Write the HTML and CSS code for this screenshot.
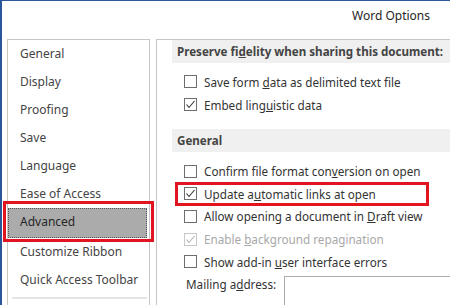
FILE: index.html
```html
<!DOCTYPE html>
<html lang="en">

<head>
  <meta charset="UTF-8" />
  <title>Word Options</title>
  <link rel="stylesheet" href="styles.css">
</head>

<body>
  <div class="window">
    <div class="titlebar">
      <span class="title">Word Options</span>
    </div>

    <div class="main">
      <ul class="nav">
        <li class="nav-item">General</li>
        <li class="nav-item">Display</li>
        <li class="nav-item">Proofing</li>
        <li class="nav-item">Save</li>
        <li class="nav-item">Language</li>
        <li class="nav-item">Ease of Access</li>
        <li class="nav-item active">Advanced</li>
        <li class="nav-item">Customize Ribbon</li>
        <li class="nav-item">Quick Access Toolbar</li>
        <li class="nav-sep"></li>
      </ul>

      <div class="panel">
        <div class="section-head">Preserve fi<u>d</u>elity when sharing this document:</div>
        <div class="group">
          <label class="row"><span class="box"></span><span>Save form <u>d</u>ata as delimited text file</span></label>
          <label class="row"><span class="box"><svg viewBox="0 0 11 11"><polyline points="1.5,5.5 4,8.5 9.5,2" /></svg></span><span>Embed ling<u>u</u>istic data</span></label>
        </div>

        <div class="section-head">General</div>
        <div class="group general">
          <label class="row"><span class="box"></span><span>Confirm file format con<u>v</u>ersion on open</span></label>
          <label class="row marked"><span class="box"><svg viewBox="0 0 11 11"><polyline points="1.5,5.5 4,8.5 9.5,2" /></svg></span><span>Update a<u>u</u>tomatic links at open</span></label>
          <label class="row"><span class="box"></span><span>Allow opening a document in <u>D</u>raft view</span></label>
          <label class="row disabled"><span class="box"><svg viewBox="0 0 11 11"><polyline points="1.5,5.5 4,8.5 9.5,2" /></svg></span><span>Enable <u>b</u>ackground repagination</span></label>
          <label class="row"><span class="box"></span><span>Show add-in <u>u</u>ser interface errors</span></label>
          <div class="mail">
            <span class="mail-label">Mailing a<u>d</u>dress:</span>
            <span class="mail-input"></span>
          </div>
        </div>
      </div>
    </div>
  </div>
</body>

</html>
```

FILE: styles.css
```css
    body {
      margin: 0;
      background-color: white;
      font-family: "Noto Sans", "Open Sans", sans-serif;
      overflow: hidden;
    }

    .window {
      height: 305px;
      box-sizing: border-box;
      border-top: 1px solid #2b579a;
      border-left: 2px solid #2b579a;
      display: flex;
      flex-direction: column;
      overflow: hidden;
    }

    .titlebar {
      height: 38px;
      flex-shrink: 0;
      display: flex;
      justify-content: flex-end;
      padding-right: 20px;
    }

    .title {
      margin-top: 7px;
      line-height: 16px;
      font-size: 12px;
      color: #262626;
    }

    .main {
      flex: 1;
      min-height: 0;
      display: flex;
      gap: 6px;
      padding-left: 5px;
    }

    /* левое меню */
    .nav {
      width: 143px;
      flex-shrink: 0;
      box-sizing: border-box;
      margin: 0;
      padding: 0 2px 0 0;
      list-style: none;
      border: 1px solid #c6c6c6;
      border-bottom: none;
    }

    .nav-item {
      height: 28px;
      line-height: 28px;
      padding-left: 12px;
      font-size: 12px;
      color: #444;
    }

    .nav-item.active {
      position: relative;
      background-color: #ababab;
      border: 1px dotted #555;
      line-height: 26px;
      padding-left: 11px;
      color: #262626;
    }

    /* красная рамка поверх пункта */
    .nav-item.active::after {
      content: "";
      position: absolute;
      left: -6px;
      top: -8px;
      width: 151px;
      height: 41px;
      box-sizing: border-box;
      border: 3px solid #e0151f;
    }

    .nav-sep {
      height: 2px;
      margin: 3px 0 0 4px;
      background-color: #e4e4e4;
    }

    /* правая панель */
    .panel {
      flex: 1;
      min-width: 0;
      border-left: 1px solid #c6c6c6;
      border-top: 1px solid #c6c6c6;
      padding-left: 15px;
    }

    .section-head {
      height: 23px;
      line-height: 23px;
      padding-left: 5px;
      background-color: #f0f0f0;
      font-size: 11.6px;
      font-weight: bold;
      color: #444;
      white-space: nowrap;
    }

    .group {
      padding-top: 7px;
      padding-bottom: 13px;
    }

    .group.general {
      padding-top: 8px;
    }

    .row {
      position: relative;
      height: 23px;
      display: flex;
      align-items: center;
      gap: 7px;
      padding-left: 12px;
      font-size: 11.7px;
      color: #333;
      white-space: nowrap;
    }

    .general .row {
      height: 22.6px;
    }

    .row.marked::after {
      content: "";
      position: absolute;
      left: 3px;
      top: -1px;
      width: 254px;
      height: 24px;
      box-sizing: border-box;
      border: 3px solid #e0151f;
    }

    .box {
      width: 13px;
      height: 13px;
      box-sizing: border-box;
      border: 1px solid #6e6e6e;
      background-color: white;
      flex-shrink: 0;
    }

    .box svg {
      display: block;
      width: 11px;
      height: 11px;
    }

    .box polyline {
      fill: none;
      stroke: #333;
      stroke-width: 1.1;
    }

    .row.disabled {
      color: #a8a8a8;
    }

    .row.disabled .box {
      border-color: #c8c8c8;
    }

    .row.disabled polyline {
      stroke: #b4b4b4;
    }

    .mail {
      display: flex;
      padding-left: 14px;
      font-size: 11.7px;
      color: #333;
    }

    .mail-label {
      width: 98px;
      flex-shrink: 0;
      line-height: 22px;
      white-space: nowrap;
    }

    .mail-input {
      flex: 1;
      height: 40px;
      margin-top: 3px;
      border: 1px solid #acacac;
      border-right: none;
    }
```
